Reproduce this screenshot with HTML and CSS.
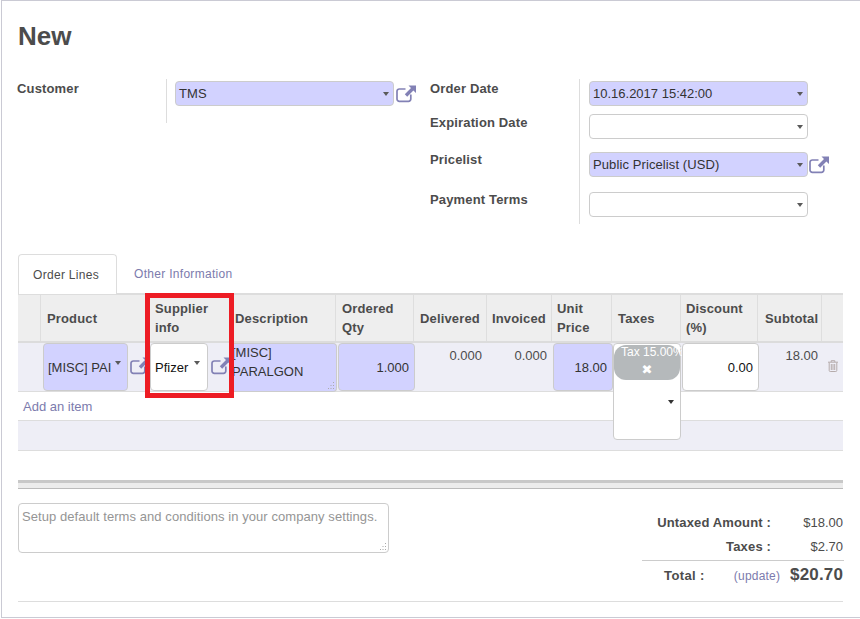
FILE: index.html
```html
<!DOCTYPE html>
<html lang="en">

<head>
    <meta charset="UTF-8">
    <meta name="viewport" content="width=device-width, initial-scale=1.0">
    <title>New Quotation</title>
    <link rel="stylesheet" href="styles.css">
</head>

<body>
    <svg class="defs" width="0" height="0">
        <symbol id="ext" viewBox="0 0 20 18">
            <path d="M14.800 9.500v4.500a2.300 2.300 0 0 1-2.300 2.300H3.300A2.300 2.300 0 0 1 1 14V6.300A2.300 2.300 0 0 1 3.300 4H9.500" fill="none" stroke="currentColor" stroke-width="1.700"/>
            <path d="M12.500 0.500H20V8L17.400 5.500 11.200 11.700 8.800 9.300 15 3Z" fill="currentColor"/>
        </symbol>
        <symbol id="grip" viewBox="0 0 9 9">
            <path d="M7 1h1v1H7zM4.500 4h1v1h-1zM7 4h1v1H7zM2 7h1v1H2zM4.500 7h1v1h-1zM7 7h1v1H7z" fill="#aaa"/>
        </symbol>
    </svg>

    <div class="sheet">
        <h1>New</h1>

        <!-- Header fields -->
        <div class="head-groups">
            <div class="group group-left">
                <div class="labels">
                    <div class="lbl lbl-customer">Customer</div>
                </div>
                <div class="fields">
                    <div class="field-row">
                        <div class="field req"><span>TMS</span><i class="caret"></i></div>
                        <svg class="ext-icon"><use href="#ext"/></svg>
                    </div>
                </div>
            </div>
            <div class="group group-right">
                <div class="labels">
                    <div class="lbl lbl-date">Order Date</div>
                    <div class="lbl lbl-exp">Expiration Date</div>
                    <div class="lbl lbl-price">Pricelist</div>
                    <div class="lbl lbl-pay">Payment Terms</div>
                </div>
                <div class="fields">
                    <div class="field-row"><div class="field req"><span class="date-val">10.16.2017 15:42:00</span><i class="caret"></i></div></div>
                    <div class="field-row row-exp"><div class="field"><span></span><i class="caret"></i></div></div>
                    <div class="field-row row-price">
                        <div class="field req"><span>Public Pricelist (USD)</span><i class="caret"></i></div>
                        <svg class="ext-icon"><use href="#ext"/></svg>
                    </div>
                    <div class="field-row row-pay"><div class="field"><span></span><i class="caret"></i></div></div>
                </div>
            </div>
        </div>

        <!-- Tabs -->
        <div class="tabs">
            <div class="tab active">Order Lines</div>
            <div class="tab">Other Information</div>
        </div>

        <!-- Order lines -->
        <div class="lines">
            <div class="line-grid line-head">
                <div></div>
                <div>Product</div>
                <div class="th-wide">Supplier info</div>
                <div class="th-desc">Description</div>
                <div>Ordered Qty</div>
                <div>Delivered</div>
                <div class="th-tight">Invoiced</div>
                <div class="th-tight">Unit Price</div>
                <div>Taxes</div>
                <div class="th-tight">Discount (%)</div>
                <div class="th-wide">Subtotal</div>
                <div></div>
            </div>
            <div class="line-grid line-row">
                <div></div>
                <div class="cell-m2o">
                    <div class="cell-box req box-product"><span class="clip">[MISC] PAI</span><i class="caret"></i></div>
                    <svg class="ext-icon ext-small"><use href="#ext"/></svg>
                </div>
                <div class="cell-m2o">
                    <div class="cell-box box-supplier"><span>Pfizer</span><i class="caret"></i></div>
                    <svg class="ext-icon ext-supplier"><use href="#ext"/></svg>
                </div>
                <div class="cell-box req box-desc"><span class="desc-text">[MISC]<br>PARALGON</span><svg class="grip"><use href="#grip"/></svg></div>
                <div class="cell-box req num box-qty">1.000</div>
                <div class="ro">0.000</div>
                <div class="ro">0.000</div>
                <div class="cell-box req num box-unit">18.00</div>
                <div class="taxes">
                    <div class="tax-tag">
                        <span class="tax-name">Tax 15.00%</span>
                        <span class="tax-x">✖</span>
                    </div>
                    <i class="caret caret-tax"></i>
                </div>
                <div class="cell-box num box-disc">0.00</div>
                <div class="ro ro-sub">18.00</div>
                <div class="trash">
                    <svg width="10" height="12" viewBox="0 0 10 12">
                        <path d="M0 2.200h10M3.200 2V.7h3.600V2M1.200 2.500v8a1 1 0 0 0 1 1h5.600a1 1 0 0 0 1-1v-8M3.300 4v6M5 4v6M6.700 4v6" fill="none" stroke="#b5abab" stroke-width="1"/>
                    </svg>
                </div>
            </div>
            <div class="add-row"><a class="link">Add an item</a></div>
            <div class="band"></div>
        </div>

        <div class="foot-bar"></div>

        <!-- Notes and totals -->
        <div class="summary">
            <div class="notes">Setup default terms and conditions in your company settings.<svg class="grip"><use href="#grip"/></svg></div>
            <div class="totals">
                <div class="total-line"><b>Untaxed Amount :</b><span>$18.00</span></div>
                <div class="total-line"><b>Taxes :</b><span>$2.70</span></div>
                <div class="grand">
                    <b class="grand-label">Total :</b>
                    <a class="link update">(update)</a>
                    <b class="grand-val">$20.70</b>
                </div>
            </div>
        </div>

        <!-- Red annotation -->
        <div class="mark"></div>
    </div>
</body>

</html>
```

FILE: styles.css
```css
* {
    box-sizing: border-box;
}

body {
    margin: 0;
    font-family: "Liberation Sans", Arial, sans-serif;
    font-size: 13px;
    color: #4c4c4c;
    background: white;
}

b,
.labels,
.line-head {
    letter-spacing: 0.15px;
}

.defs {
    position: absolute;
}

.sheet {
    position: relative;
    margin-left: 1px;
    width: 859px;
    height: 618px;
    padding: 0 17px 0 16px;
    border: 1px solid #cacad4;
    border-right: 0;
    overflow: hidden;
}

h1 {
    margin: 20px 0 0;
    height: 30px;
    font-size: 26px;
    line-height: 30px;
    font-weight: bold;
}

/* header fields */
.head-groups {
    display: flex;
    margin-top: 28px;
    height: 175px;
}

.group {
    display: flex;
}

.group-left {
    width: 412px;
}

.labels {
    font-weight: bold;
}

.group-left .labels {
    width: 149px;
    height: 44px;
    border-right: 1px solid #ddd;
}

.group-right .labels {
    width: 150px;
    height: 145px;
    border-right: 1px solid #ddd;
}

.lbl {
    line-height: 15px;
}

.lbl-customer {
    margin: 2px 0 0 -1px;
}

.lbl-date {
    margin-top: 2px;
}

.lbl-exp {
    margin-top: 19px;
}

.lbl-price {
    margin-top: 22px;
}

.lbl-pay {
    margin-top: 25px;
}

.group-left .fields {
    margin-left: 8px;
}

.group-right .fields {
    margin-left: 9px;
}

.field-row {
    display: flex;
    align-items: center;
    margin-top: 2px;
    height: 25px;
}

.row-exp {
    margin-top: 8px;
}

.row-price {
    margin-top: 13px;
}

.row-pay {
    margin-top: 15px;
}

.field {
    display: flex;
    align-items: center;
    justify-content: space-between;
    width: 219px;
    height: 25px;
    padding: 0 4px 0 3px;
    border: 1px solid #ccc;
    border-radius: 4px;
    background: white;
    color: #333;
    letter-spacing: 0.1px;
}

.date-val {
    letter-spacing: 0;
}

.req {
    background: #d2d2ff;
}

.caret {
    display: block;
    flex: none;
    width: 0;
    height: 0;
    border-left: 3.5px solid transparent;
    border-right: 3.5px solid transparent;
    border-top: 4px solid #5a5a5a;
}

.ext-icon {
    flex: none;
    width: 20px;
    height: 18px;
    margin-left: 1px;
    color: #8281b5;
}

.group-left .ext-icon {
    margin-left: 2px;
}

/* tabs */
.tabs {
    display: flex;
    height: 39px;
}

.tab {
    padding: 0 17px;
    line-height: 40px;
    font-size: 12px;
    letter-spacing: 0.3px;
    color: #7c7bad;
}

.tab.active {
    width: 99px;
    height: 40px;
    padding: 0 14px;
    color: #4c4c4c;
    background: white;
    border: 1px solid #ddd;
    border-bottom: 0;
    border-radius: 4px 4px 0 0;
    position: relative;
    z-index: 1;
}

/* order lines */
.lines {
    border-top: 2px solid #ddd;
}

.line-grid {
    display: grid;
    grid-template-columns: 23px 107px 84px 104px 78px 73px 65px 60px 69px 77px 64px 21px;
}

.line-head {
    height: 48px;
    background: #eeeeee;
    border-bottom: 2px solid #dcdcdc;
    font-weight: bold;
    line-height: 19px;
}

.line-head > div {
    display: flex;
    align-items: center;
    padding: 0 4px 0 6px;
    border-right: 1px solid #dedede;
}

.line-head > div:last-child {
    border-right: 0;
}

.line-head > .th-desc {
    padding-left: 3px;
}

.line-head > .th-tight {
    padding-left: 5px;
}

.line-head > .th-wide {
    padding-left: 7px;
}

.line-row {
    height: 49px;
    background: #eeeef6;
    border-bottom: 1px solid #ddd;
}

.cell-m2o {
    display: flex;
    height: 48px;
}

.cell-box {
    position: relative;
    height: 48px;
    border: 1px solid #ccc;
    border-radius: 4px;
    background: white;
    color: #333;
}

.cell-box.req {
    background: #d2d2ff;
}

.box-product {
    display: flex;
    flex: none;
    align-items: center;
    width: 85px;
    margin-left: 2px;
    padding-left: 4px;
}

.clip {
    width: 65px;
    overflow: hidden;
    white-space: nowrap;
}

.box-product .caret {
    margin: -9px 0 0 2px;
}

.ext-small {
    margin-left: 2px;
    margin-top: 14px;
}

.box-supplier {
    display: flex;
    flex: none;
    align-items: center;
    width: 58px;
    margin-left: 2px;
    padding-left: 4px;
    color: #111;
}

.box-supplier .caret {
    margin: -9px 0 0 6px;
}

.ext-supplier {
    margin-left: 3px;
    margin-top: 14px;
}

.box-desc {
    width: 105px;
    height: 49px;
    border-left: 0;
    line-height: 19px;
    border-radius: 0 4px 4px 0;
}

.desc-text {
    display: block;
    margin-top: -1px;
}

.grip {
    position: absolute;
    right: 1px;
    bottom: 1px;
    width: 9px;
    height: 9px;
}

.num {
    display: flex;
    align-items: center;
    justify-content: flex-end;
    padding-right: 5px;
}

.box-qty {
    width: 77px;
    margin-left: 2px;
}

.box-unit {
    width: 60px;
    margin-left: 1px;
}

.box-disc {
    width: 77px;
    margin-left: 1px;
    color: #111;
}

.ro {
    padding: 5px 5px 0 0;
    text-align: right;
}

.ro-sub {
    padding-right: 4px;
}

.taxes {
    position: relative;
    width: 68px;
    height: 97px;
    margin-left: 1px;
    padding-top: 1px;
    background: white;
    border: 1px solid #ccc;
    border-radius: 4px;
}

.tax-tag {
    height: 35px;
    border-radius: 12px;
    background: #b5b9bb;
    color: white;
    text-align: center;
    white-space: nowrap;
}

.tax-name {
    display: block;
    width: 76px;
    padding-left: 7px;
    font-size: 12px;
    line-height: 15px;
    text-align: left;
}

.tax-x {
    display: block;
    margin-top: 2px;
    font-family: "DejaVu Sans", sans-serif;
    font-size: 13px;
    line-height: 15px;
}

.caret-tax {
    position: absolute;
    right: 6px;
    top: 56px;
    border-top-color: #333;
}

.trash {
    padding: 17px 0 0 6px;
}

.add-row {
    height: 28px;
    padding: 7px 0 0 5px;
    line-height: 15px;
}

.link {
    color: #7c7bad;
}

.band {
    height: 31px;
    background: #eeeef6;
    border-top: 1px solid #ddd;
    border-bottom: 1px solid #ddd;
}

.foot-bar {
    height: 9px;
    margin-top: 29px;
    background: #ececec;
    border-top: 3px solid #c8c8c8;
    border-bottom: 1px solid #bbb;
}

/* notes and totals */
.summary {
    display: flex;
    justify-content: space-between;
    height: 113px;
    padding-top: 14px;
    border-bottom: 1px solid #ddd;
}

.notes {
    position: relative;
    width: 371px;
    height: 50px;
    padding: 5px 3px;
    border: 1px solid #ccc;
    border-radius: 4px;
    font-size: 13px;
    line-height: 15px;
    letter-spacing: 0.07px;
    color: #959595;
}

.totals {
    width: 202px;
    margin-right: -1px;
    padding-top: 12px;
}

.total-line {
    display: flex;
    justify-content: space-between;
    height: 24px;
    line-height: 15px;
}

.total-line b {
    width: 129px;
    text-align: right;
    white-space: nowrap;
}

.total-line span {
    width: 72px;
    padding-right: 1px;
    text-align: right;
}

.total-line:nth-child(2) {
    height: 21px;
}

.grand {
    display: flex;
    align-items: baseline;
    height: 34px;
    padding-top: 4px;
    border-top: 1px solid #ccc;
}

.grand-label {
    margin-left: 22px;
    font-size: 13px;
    letter-spacing: 0.4px;
}

.update {
    margin-left: 29px;
    font-size: 12px;
    letter-spacing: 0.2px;
}

.grand-val {
    margin-left: auto;
    margin-right: 1px;
    font-size: 17px;
}

/* red box drawn on top of the screenshot */
.mark {
    position: absolute;
    left: 143px;
    top: 292px;
    width: 89px;
    height: 105px;
    border: 5px solid #ed1c24;
    z-index: 2;
}
```
